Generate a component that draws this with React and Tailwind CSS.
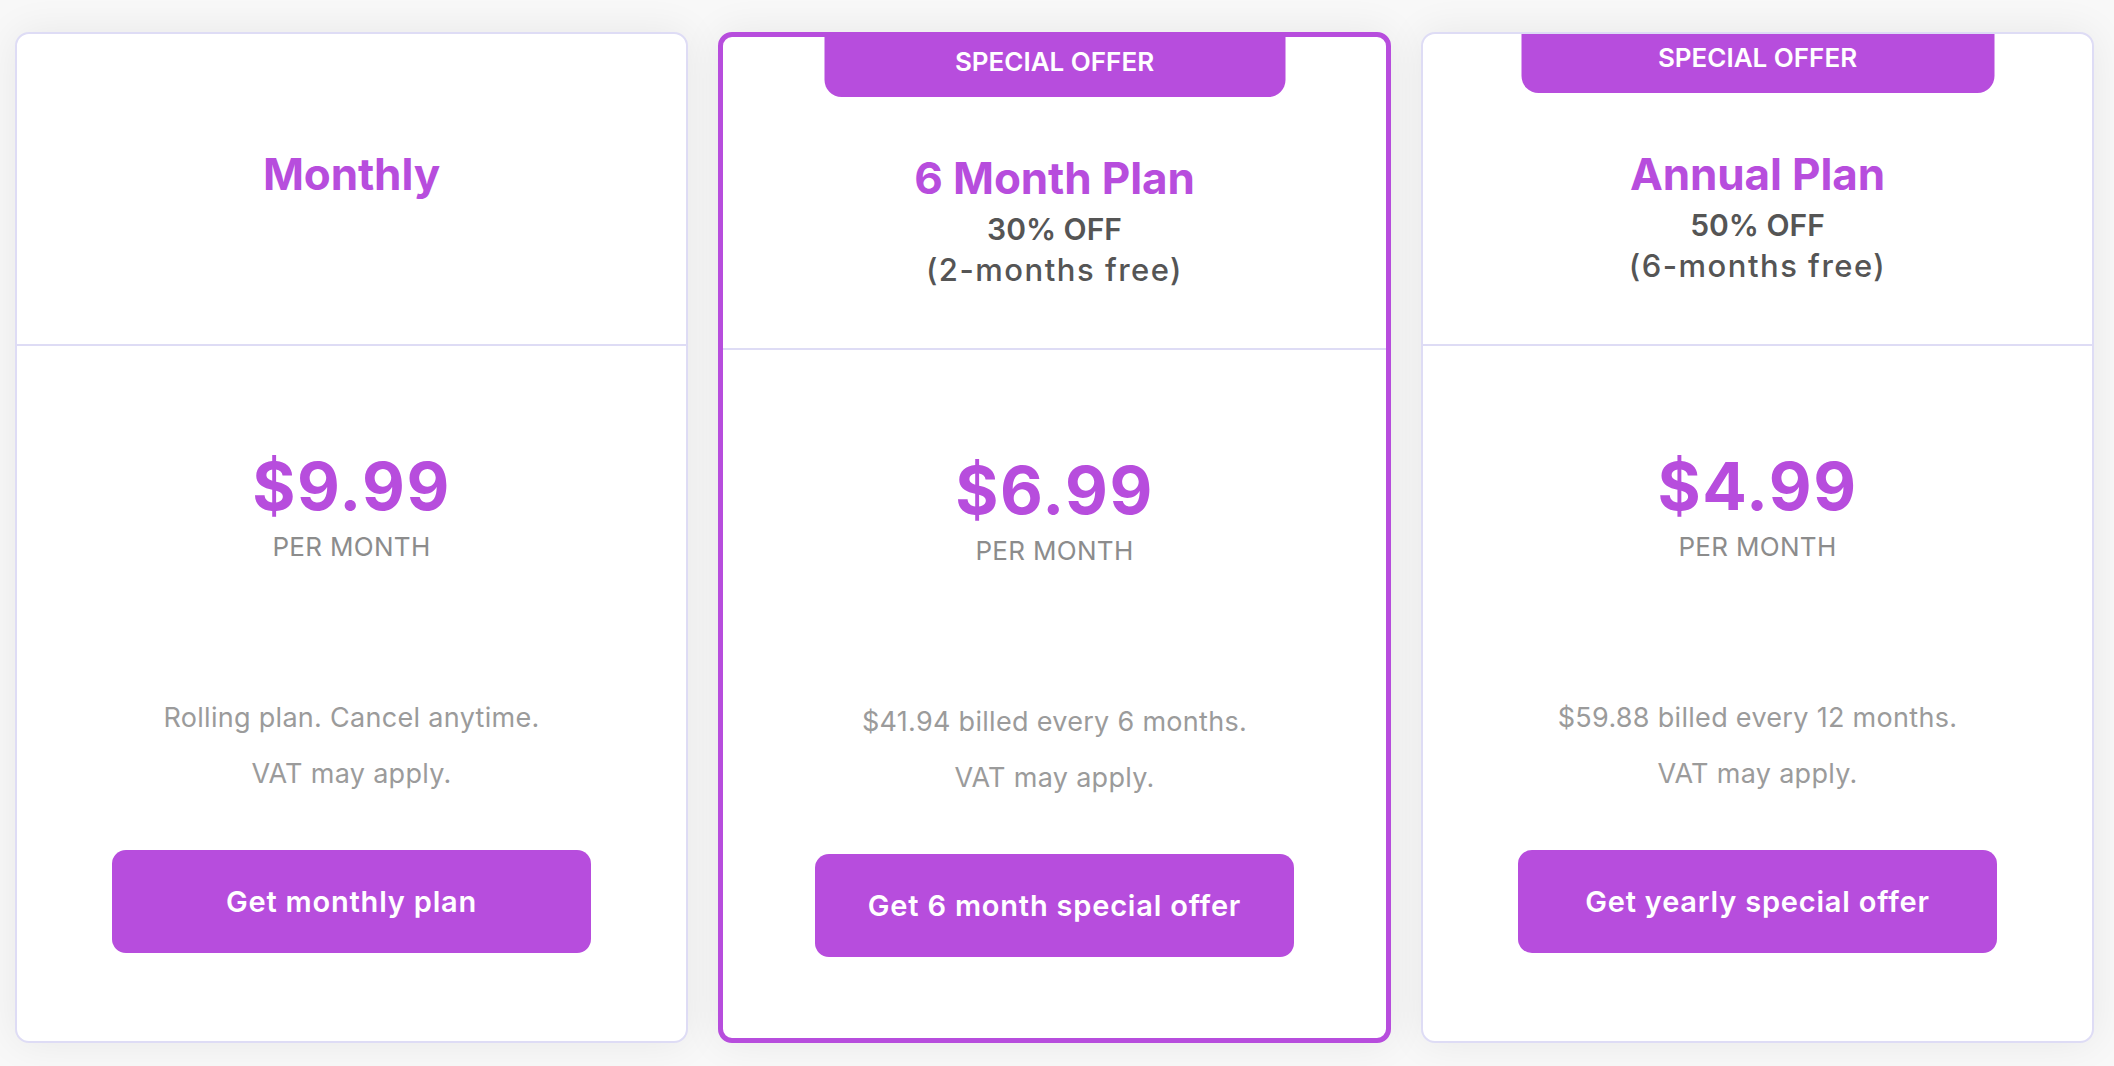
import React from "react";

const plans = [
  {
    featured: false,
    badge: null,
    title: "Monthly",
    sub1: null,
    sub2: null,
    price: "$9.99",
    note1: "Rolling plan. Cancel anytime.",
    note2: "VAT may apply.",
    cta: "Get monthly plan",
  },
  {
    featured: true,
    badge: "SPECIAL OFFER",
    title: "6 Month Plan",
    sub1: "30% OFF",
    sub2: "(2-months free)",
    price: "$6.99",
    note1: "$41.94 billed every 6 months.",
    note2: "VAT may apply.",
    cta: "Get 6 month special offer",
  },
  {
    featured: false,
    badge: "SPECIAL OFFER",
    title: "Annual Plan",
    sub1: "50% OFF",
    sub2: "(6-months free)",
    price: "$4.99",
    note1: "$59.88 billed every 12 months.",
    note2: "VAT may apply.",
    cta: "Get yearly special offer",
  },
];

function Card({ plan }) {
  const f = plan.featured;
  return (
    <div
      className={
        f
          ? "relative flex flex-col rounded-[14px] border-[5px] border-[#b74ddd] bg-white shadow-[0_0_40px_rgba(0,0,0,0.07)]"
          : "relative flex flex-col rounded-[14px] border-2 border-[#dedcf5] bg-white shadow-[0_0_40px_rgba(0,0,0,0.07)]"
      }
    >
      {plan.badge && (
        <div
          className={
            f
              ? "absolute left-1/2 top-0 flex h-[60px] w-[461px] -translate-x-1/2 justify-center rounded-b-[17px] bg-[#b74ddd] pt-[9px] text-[26px] font-semibold leading-[32px] text-white"
              : "absolute left-1/2 top-0 flex h-[59px] w-[473px] -translate-x-1/2 justify-center rounded-b-[17px] bg-[#b74ddd] pt-[8px] text-[26px] font-semibold leading-[32px] text-white"
          }
        >
          {plan.badge}
        </div>
      )}
      <div
        className={
          f
            ? "flex h-[311px] flex-col items-center pt-[115px] text-center"
            : "flex h-[310px] flex-col items-center pt-[114px] text-center"
        }
      >
        <div className="text-[44px] font-bold leading-[52px] tracking-[-0.1px] text-[#b74ddd]">
          {plan.title}
        </div>
        {plan.sub1 && (
          <div className="mt-[4px] text-[30px] font-semibold leading-[42px] text-[#555555]">
            {plan.sub1}
          </div>
        )}
        {plan.sub2 && (
          <div className="text-[31px] font-medium leading-[40px] tracking-[1.5px] text-[#555555]">
            {plan.sub2}
          </div>
        )}
      </div>
      <div className="h-[2px] bg-[#dedcf5]" />
      <div
        className={
          f
            ? "flex flex-col items-center pb-[81px] pt-[104px] text-center"
            : "flex flex-col items-center pb-[88px] pt-[104px] text-center"
        }
      >
        <div className="text-[66px] font-bold leading-[72px] tracking-[1.5px] text-[#b74ddd]">
          {plan.price}
        </div>
        <div className="mt-[9px] text-[26px] font-normal leading-[32px] tracking-[0.3px] text-[#8c8c8c]">
          PER MONTH
        </div>
        <div className="mt-[137px] text-[27px] leading-[36px] tracking-[0.3px] text-[#9b9b9b]">
          {plan.note1}
        </div>
        <div className="mt-[20px] text-[27px] leading-[36px] tracking-[0.3px] text-[#9b9b9b]">
          {plan.note2}
        </div>
        <button className="mt-[58px] flex h-[103px] w-[479px] items-center justify-center rounded-[14px] bg-[#b74ddd] text-[29px] font-semibold tracking-[0.8px] text-white">
          {plan.cta}
        </button>
      </div>
    </div>
  );
}

export default function App() {
  return (
    <div className="min-h-screen bg-[#f8f8f8] pb-[23px] pl-[15px] pr-[20px] pt-[32px] font-['Inter',sans-serif]">
      <div className="grid grid-cols-3 gap-[30px]">
        {plans.map((p) => (
          <Card key={p.title} plan={p} />
        ))}
      </div>
    </div>
  );
}
